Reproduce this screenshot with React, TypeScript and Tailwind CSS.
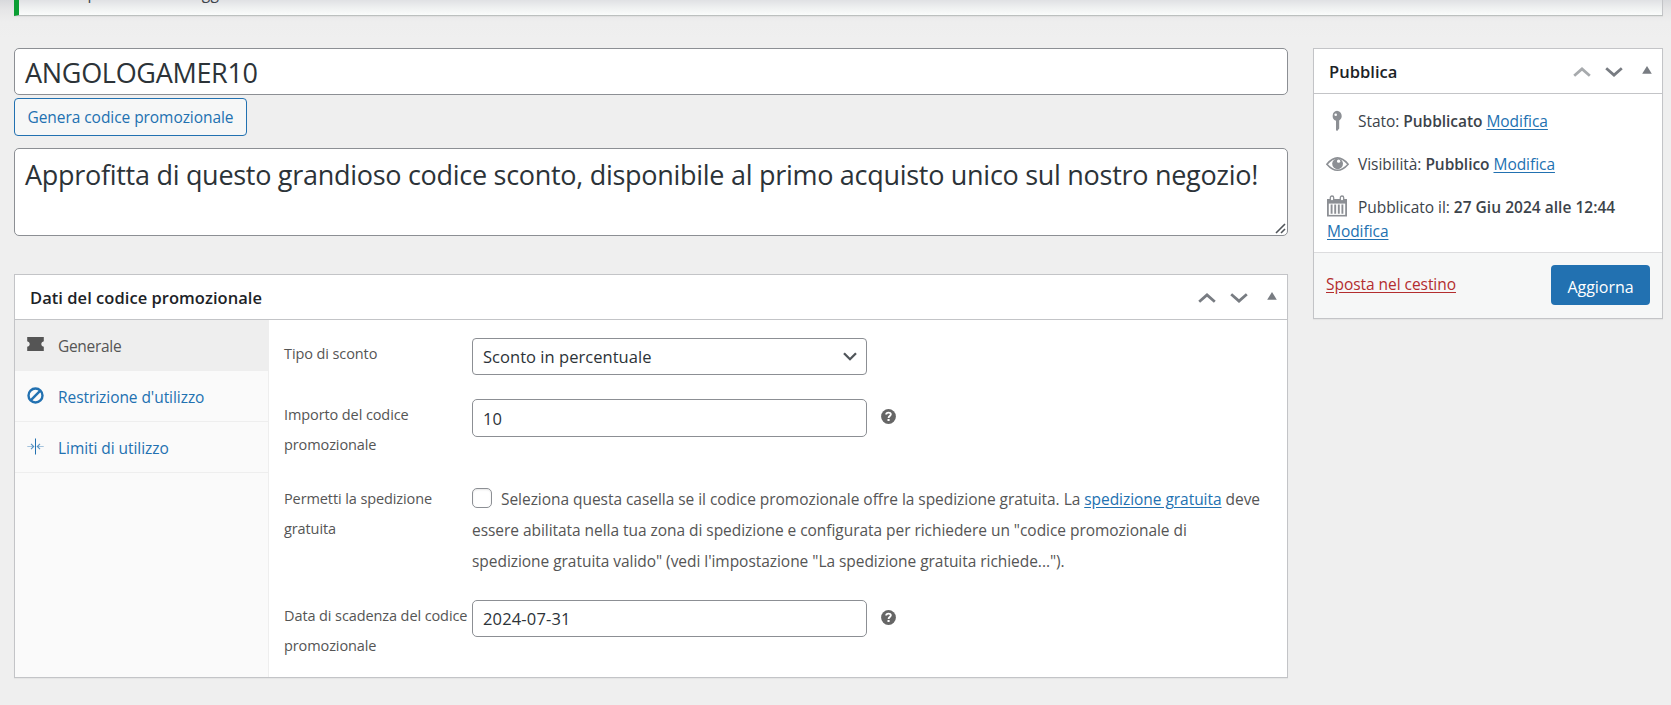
import React from "react";

type IconProps = { className?: string };

const ChevronUp = ({ className = "" }: IconProps) => (
  <svg className={className} width="18" height="10" viewBox="0 0 18 10" fill="none" stroke="currentColor" strokeWidth="2.8">
    <path d="M1.2 8.7 L9 1.9 L16.8 8.7" />
  </svg>
);

const ChevronDown = ({ className = "" }: IconProps) => (
  <svg className={className} width="18" height="10" viewBox="0 0 18 10" fill="none" stroke="currentColor" strokeWidth="2.8">
    <path d="M1.2 1.3 L9 8.1 L16.8 1.3" />
  </svg>
);

const Triangle = ({ className = "" }: IconProps) => (
  <svg className={className} width="10" height="8" viewBox="0 0 10 8" fill="currentColor">
    <path d="M5 0 L9.8 7.8 H0.2 Z" />
  </svg>
);

const HelpIcon = ({ className = "" }: IconProps) => (
  <svg className={className} width="15" height="15" viewBox="0 0 15 15">
    <circle cx="7.5" cy="7.5" r="7.4" fill="#666" />
    <path d="M5.2 5.5 C5.2 3 10 3 9.8 5.5 C9.7 7 7.6 7 7.6 8.9" fill="none" stroke="#fff" strokeWidth="1.9" />
    <rect x="6.5" y="10" width="2.1" height="2" fill="#fff" />
  </svg>
);

const TicketIcon = () => (
  <svg width="17" height="14" viewBox="0 0 17 14" fill="currentColor">
    <path d="M0.2 0 H16.8 V4.2 Q14.4 4.6 14.2 7 Q14.4 9.4 16.8 9.8 V14 H0.2 V9.8 Q2.6 9.4 2.8 7 Q2.6 4.6 0.2 4.2 Z" />
  </svg>
);

const ForbiddenIcon = () => (
  <svg width="17" height="17" viewBox="0 0 17 17" fill="none" stroke="currentColor" strokeWidth="2.4">
    <circle cx="8.5" cy="8.5" r="7" />
    <path d="M3.9 13.1 L13.1 3.9" />
  </svg>
);

const LimitIcon = () => (
  <svg width="17" height="17" viewBox="0 0 17 17" fill="none" stroke="currentColor">
    <path d="M8.5 0.5 V16.5" strokeWidth="1" />
    <path d="M0.3 8.5 H6.3 M16.7 8.5 H10.7" strokeWidth="1.2" opacity="0.4" />
    <path d="M4 5.8 L6.7 8.5 L4 11.2 M13 5.8 L10.3 8.5 L13 11.2" strokeWidth="1.1" opacity="0.75" />
  </svg>
);

const PinIcon = () => (
  <svg width="22" height="22" viewBox="0 0 22 22">
    <path d="M11 0.8 A5.2 5.2 0 0 1 13.2 10.4 V18.4 L11.2 21 L10 20.2 V10.8 A5.2 5.2 0 0 1 11 0.8 Z" fill="#8c8f94" />
    <circle cx="9.7" cy="4.8" r="1.3" fill="#fff" />
  </svg>
);

const EyeIcon = () => (
  <svg width="23" height="22" viewBox="0 0 23 22">
    <path d="M0.9 11.2 Q11.5 -1.4 22.1 11.2 Q11.5 23.4 0.9 11.2 Z" fill="none" stroke="#8c8f94" strokeWidth="1.6" />
    <circle cx="11.6" cy="10.8" r="5.4" fill="#8c8f94" />
    <circle cx="12.6" cy="8.2" r="1.6" fill="#fff" />
  </svg>
);

const CalendarIcon = () => (
  <svg width="22" height="22" viewBox="0 0 22 22">
    <path d="M1 4 H21 V21.5 H1 Z" fill="#8c8f94" />
    <path d="M2.8 8.6 H19.2 V19.9 H2.8 Z" fill="#fff" />
    <path d="M5.6 9.6 V18.8 M9.2 9.6 V18.8 M12.8 9.6 V18.8 M16.4 9.6 V18.8" stroke="#8c8f94" strokeWidth="1.9" />
    <rect x="4.3" y="1" width="3.4" height="5" rx="1.7" fill="#fff" stroke="#8c8f94" strokeWidth="1.3" />
    <rect x="14.3" y="1" width="3.4" height="5" rx="1.7" fill="#fff" stroke="#8c8f94" strokeWidth="1.3" />
  </svg>
);

function PanelHeader({ title, dimUp = false }: { title: string; dimUp?: boolean }) {
  return (
    <div className="flex h-[45px] items-start border-b border-[#c3c4c7] pt-[9px] pr-2.5 pl-[15px]">
      <h2 className="grow text-[16.5px] leading-[27px] font-semibold tracking-[0.04px] text-[#1d2327]">{title}</h2>
      <div className="flex items-start pt-2 text-[#787c82]">
        <ChevronUp className={dimUp ? "mt-px mr-3.5 text-[#a7aaad]" : "mt-px mr-3.5"} />
        <ChevronDown className="mt-px mr-[19px]" />
        <Triangle />
      </div>
    </div>
  );
}

function Link({ children }: { children: React.ReactNode }) {
  return (
    <a href="#" className="text-[#2271b1] underline underline-offset-[2px]">
      {children}
    </a>
  );
}

function Field({ value, className = "" }: { value: string; className?: string }) {
  return (
    <div className={"flex w-[395px] items-center rounded-[5px] border border-[#8c8f94] px-2.5 pt-0.5 text-[16.5px] text-[#2c3338] " + className}>
      <span className="grow tracking-[0.15px]">{value}</span>
    </div>
  );
}

function Label({ children }: { children: React.ReactNode }) {
  return (
    <div className="-ml-px w-[188px] shrink-0 pt-px text-[14.5px] leading-[30px] tracking-[-0.1px] whitespace-nowrap">{children}</div>
  );
}

export default function App() {
  return (
    <div className="flex h-[705px] w-[1671px] flex-col overflow-hidden bg-[#f0f0f1] bg-[linear-gradient(to_bottom,#d8d9dc_0px,#e6e6e7_10px,#eeeeee_22px,#efefef_40px)] font-['Open_Sans','Noto_Sans',sans-serif] text-[15.5px] tracking-[-0.045px] text-[#3c434a]">
      <div className="ml-[14px] flex h-4 w-[1649px] shrink-0 items-end overflow-hidden border-r border-b border-l-[5px] border-r-[#c3c4c7] border-b-[#bcc0bf] border-l-[#0a9e33] bg-[linear-gradient(to_bottom,#e0e1e4,#eff1f1_8px,#fafcfb)] pb-[12px] pl-[15px] shadow-[0_1px_1px_rgba(0,0,0,0.04)]">
        <p className="leading-[20px] tracking-[0.12px] whitespace-nowrap">Codice promozionale aggiornato.</p>
      </div>

      <div className="flex items-start gap-[25px] pt-8 pl-[14px]">
        <main className="w-[1274px] shrink-0">
          <div className="flex h-[47px] items-center rounded-[5px] border border-[#8c8f94] bg-white px-[10px] pt-1 text-[27px] tracking-[-0.3px] text-[#2c3338]">
            ANGOLOGAMER10
          </div>
          <button className="mt-[3px] flex h-[38px] w-[233px] items-center justify-center rounded-[4px] border border-[#2271b1] bg-[#f6f7f7] pt-0.5 tracking-[-0.06px] text-[#2271b1]">
            Genera codice promozionale
          </button>
          <div className="relative mt-3 h-[88px] rounded-[5px] border border-[#8c8f94] bg-white px-[10px] pt-[7px] text-[27px] leading-[38px] tracking-[-0.287px] whitespace-nowrap text-[#2c3338]">
            Approfitta di questo grandioso codice sconto, disponibile al primo acquisto unico sul nostro negozio!
            <svg className="absolute right-[1px] bottom-[1px]" width="11" height="11" viewBox="0 0 11 11" stroke="#50555a" strokeWidth="1.6">
              <path d="M1 10 L10 1 M6 10 L10 6" />
            </svg>
          </div>

          <section className="mt-[38px] border border-[#c3c4c7] bg-white shadow-[0_1px_1px_rgba(0,0,0,0.04)]">
            <PanelHeader title="Dati del codice promozionale" />
            <div className="flex h-[357px]">
              <ul className="w-[254px] shrink-0 border-r border-[#eee] bg-[#fafafa] tracking-[-0.06px] text-[#2271b1]">
                <li className="flex h-[51px] items-center border-b border-[#eee] bg-[#eee] pl-3 text-[#555]">
                  <span className="mb-[3px] w-[31px]"><TicketIcon /></span>
                  <span className="pt-[3px] tracking-[-0.3px]">Generale</span>
                </li>
                <li className="flex h-[51px] items-center border-b border-[#eee] pl-3">
                  <span className="mb-[2px] w-[31px]"><ForbiddenIcon /></span>
                  <span className="pt-[3px]">Restrizione d'utilizzo</span>
                </li>
                <li className="flex h-[51px] items-center border-b border-[#eee] pl-3">
                  <span className="mb-[2px] w-[31px]"><LimitIcon /></span>
                  <span className="pt-[3px]">Limiti di utilizzo</span>
                </li>
              </ul>

              <div className="grow pt-[18px] pl-4 text-[#555]">
                <div className="flex h-[61px]">
                  <Label>Tipo di sconto</Label>
                  <div className="flex h-[37px] w-[395px] items-center justify-between rounded-[4px] border border-[#8c8f94] pr-[9px] pl-2.5 text-[16.5px] text-[#2c3338]">
                    <span className="pt-0.5 tracking-[0.04px]">Sconto in percentuale</span>
                    <svg width="14" height="9" viewBox="0 0 14 9" fill="none" stroke="#50555a" strokeWidth="2.3">
                      <path d="M1 1.2 L7 7.2 L13 1.2" />
                    </svg>
                  </div>
                </div>
                <div className="flex h-[84px]">
                  <Label>Importo del codice<br />promozionale</Label>
                  <Field value="10" className="h-[38px]" />
                  <HelpIcon className="mt-[10px] ml-[14px]" />
                </div>
                <div className="flex h-[117px]">
                  <Label>Permetti la spedizione<br />gratuita</Label>
                  <div className="pt-px leading-[31px] whitespace-nowrap">
                    <div className="flex">
                      <span className="mt-1 mr-[9px] h-5 w-5 rounded-[5px] border border-[#8c8f94] bg-white shadow-[inset_0_1px_2px_rgba(0,0,0,0.1)]" />
                      <span>
                        Seleziona questa casella se il codice promozionale offre la spedizione gratuita. La{" "}
                        <Link>spedizione gratuita</Link> deve
                      </span>
                    </div>
                    <div>essere abilitata nella tua zona di spedizione e configurata per richiedere un "codice promozionale di</div>
                    <div>spedizione gratuita valido" (vedi l'impostazione "La spedizione gratuita richiede...").</div>
                  </div>
                </div>
                <div className="flex">
                  <Label>Data di scadenza del codice<br />promozionale</Label>
                  <Field value="2024-07-31" className="h-[37px]" />
                  <HelpIcon className="mt-[10px] ml-[14px]" />
                </div>
              </div>
            </div>
          </section>
        </main>

        <aside className="w-[350px] shrink-0 border border-[#c3c4c7] bg-white shadow-[0_1px_1px_rgba(0,0,0,0.04)]">
          <PanelHeader title="Pubblica" dimUp />
          <div className="h-[158px] pt-[15px] pl-3 leading-6 whitespace-nowrap">
            <div className="flex h-[43px]">
              <span className="mt-px w-8"><PinIcon /></span>
              <span>Stato: <b className="font-semibold">Pubblicato</b> <Link>Modifica</Link></span>
            </div>
            <div className="flex h-[43px]">
              <span className="mt-px w-8"><EyeIcon /></span>
              <span>Visibilità: <b className="font-semibold">Pubblico</b> <Link>Modifica</Link></span>
            </div>
            <div className="flex h-6">
              <span className="w-8"><CalendarIcon /></span>
              <span>Pubblicato il: <b className="font-semibold tracking-[0.02px]">27 Giu 2024 alle 12:44</b></span>
            </div>
            <div className="pl-px"><Link>Modifica</Link></div>
          </div>
          <div className="flex h-[66px] items-start justify-between border-t border-[#dcdcde] bg-[#f6f7f7] pt-3 pr-3 pl-3">
            <a href="#" className="mt-[7px] leading-6 text-[#b32d2e] underline underline-offset-[2px]">Sposta nel cestino</a>
            <button className="h-10 w-[99px] rounded-[4px] bg-[#2271b1] pt-[3px] text-[16px] text-white">Aggiorna</button>
          </div>
        </aside>
      </div>
    </div>
  );
}
